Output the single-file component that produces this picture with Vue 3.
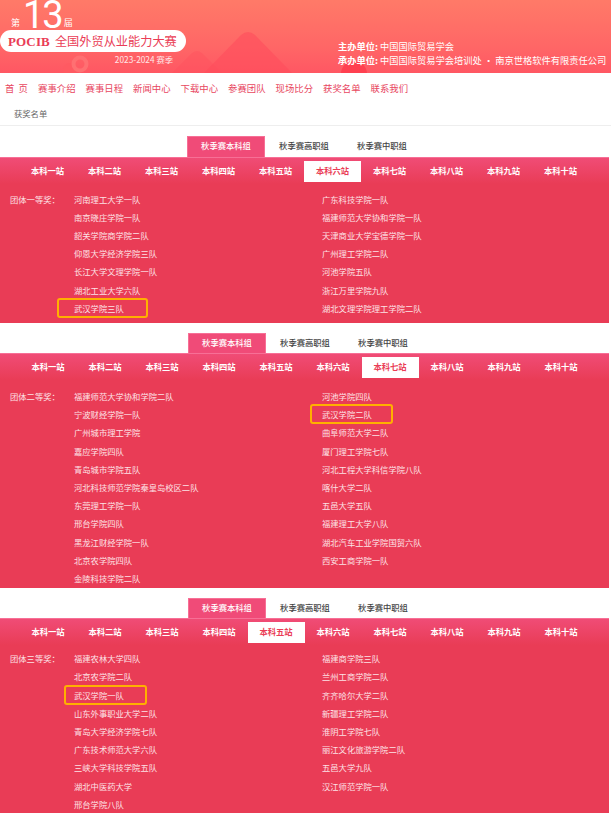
<script setup>
const navs = ['首 页', '赛事介绍', '赛事日程', '新闻中心', '下载中心', '参赛团队', '现场比分', '获奖名单', '联系我们']
const tabs = ['秋季赛本科组', '秋季赛高职组', '秋季赛中职组']
const stations = ['本科一站', '本科二站', '本科三站', '本科四站', '本科五站', '本科六站', '本科七站', '本科八站', '本科九站', '本科十站']

const sections = [
  {
    active: 5,
    award: '团体一等奖：',
    variant: 'first',
    mark: 'mark-a',
    left: ['河南理工大学一队', '南京晓庄学院一队', '韶关学院商学院二队', '仰恩大学经济学院三队', '长江大学文理学院一队', '湖北工业大学六队', '武汉学院三队'],
    right: ['广东科技学院一队', '福建师范大学协和学院一队', '天津商业大学宝德学院一队', '广州理工学院二队', '河池学院五队', '浙江万里学院九队', '湖北文理学院理工学院二队']
  },
  {
    active: 6,
    award: '团体二等奖：',
    variant: 'second',
    mark: 'mark-b',
    left: ['福建师范大学协和学院二队', '宁波财经学院一队', '广州城市理工学院', '嘉应学院四队', '青岛城市学院五队', '河北科技师范学院秦皇岛校区二队', '东莞理工学院一队', '邢台学院四队', '黑龙江财经学院一队', '北京农学院四队', '金陵科技学院二队'],
    right: ['河池学院四队', '武汉学院二队', '曲阜师范大学二队', '厦门理工学院七队', '河北工程大学科信学院八队', '喀什大学二队', '五邑大学五队', '福建理工大学八队', '湖北汽车工业学院国贸六队', '西安工商学院一队']
  },
  {
    active: 4,
    award: '团体三等奖：',
    variant: 'third',
    mark: 'mark-c',
    left: ['福建农林大学四队', '北京农学院二队', '武汉学院一队', '山东外事职业大学二队', '青岛大学经济学院七队', '广东技术师范大学六队', '三峡大学科技学院五队', '湖北中医药大学', '邢台学院八队'],
    right: ['福建商学院三队', '兰州工商学院二队', '齐齐哈尔大学二队', '新疆理工学院二队', '淮阴工学院七队', '丽江文化旅游学院二队', '五邑大学九队', '汉江师范学院一队']
  }
]

const isMark = (name) => name.startsWith('武汉学院')
</script>

<template>
  <div class="page">
    <header class="banner">
      <svg class="decor" width="611" height="73" viewBox="0 0 611 73">
        <path d="M204 73 L241 35 Q248 29 255 35 L292 73 Z" fill="#ff4c5c" opacity="0.6" />
        <path d="M172 73 L192 53 Q197 49 202 53 L222 73 Z" fill="#ff4c5c" opacity="0.35" />
        <circle cx="70" cy="70" r="7" fill="#ff5a62" />
        <circle cx="80" cy="64" r="6.5" fill="none" stroke="#ff7072" stroke-width="4" />
        <circle cx="354" cy="74" r="13" fill="#ff4050" />
      </svg>
      <div class="logo">
        <div class="edition"><span>第</span><b>13</b><span>届</span></div>
        <div class="pill"><em>POCIB</em>全国外贸从业能力大赛</div>
        <div class="season">2023-2024 赛季</div>
      </div>
      <div class="orgs">
        <div><b>主办单位:</b> 中国国际贸易学会</div>
        <div><b>承办单位:</b> 中国国际贸易学会培训处 · 南京世格软件有限责任公司</div>
      </div>
    </header>

    <nav class="nav">
      <a v-for="n in navs" :key="n">{{ n }}</a>
    </nav>

    <div class="crumb">获奖名单</div>

    <section v-for="s in sections" :key="s.award" class="block" :class="s.variant">
      <div class="tabs">
        <span v-for="(t, i) in tabs" :key="t" class="tab" :class="{ on: i === 0 }">{{ t }}</span>
      </div>
      <div class="panel">
        <div class="stations">
          <span v-for="(st, i) in stations" :key="st" class="station" :class="{ on: i === s.active }">{{ st }}</span>
        </div>
        <div class="result">
          <div class="award">{{ s.award }}</div>
          <ul class="col col-left">
            <li v-for="name in s.left" :key="name" :class="isMark(name) ? s.mark : ''">{{ name }}</li>
          </ul>
          <ul class="col col-right">
            <li v-for="name in s.right" :key="name" :class="isMark(name) ? s.mark : ''">{{ name }}</li>
          </ul>
        </div>
      </div>
    </section>
  </div>
</template>

<style scoped>
.page {
  position: relative;
  width: 611px;
  height: 813px;
  overflow: hidden;
  background: #fff;
  font-family: "Noto Sans CJK SC", "Liberation Sans", sans-serif;
}

.banner {
  position: relative;
  height: 73px;
  background: linear-gradient(180deg, #ff7a68 0%, #ff6666 65%, #ff5763 100%);
  color: #fff;
  overflow: hidden;
}

.decor {
  position: absolute;
  left: 0;
  top: 0;
}

.logo {
  position: relative;
  width: 186px;
}

.edition {
  display: flex;
  align-items: flex-end;
  height: 30px;
  padding-left: 11px;
  font-size: 9px;
}

.edition span {
  line-height: 15px;
}

.edition b {
  font-family: "Roboto", "Liberation Sans", sans-serif;
  font-weight: 400;
  font-size: 38px;
  line-height: 30px;
  letter-spacing: -2px;
  margin: 0 2px 0 3px;
}

.pill {
  height: 22px;
  line-height: 22px;
  background: #fff;
  border-radius: 11px;
  color: #ea3d56;
  font-size: 12.2px;
  padding-left: 8px;
  white-space: nowrap;
}

.pill em {
  font-family: "Liberation Serif", serif;
  font-style: normal;
  font-weight: 700;
  font-size: 13px;
  letter-spacing: 0.15px;
  margin-right: 5px;
}

.season {
  text-align: right;
  padding-right: 13px;
  margin-top: 1px;
  font-size: 8.3px;
  line-height: 13px;
  opacity: 0.85;
}

.orgs {
  position: absolute;
  left: 338px;
  top: 39px;
  font-size: 9.25px;
  line-height: 14px;
  white-space: nowrap;
}

.orgs b {
  font-weight: 700;
}

.nav {
  display: flex;
  gap: 10px;
  height: 30px;
  align-items: center;
  padding-left: 5px;
  font-size: 9.4px;
  color: #e8475f;
  white-space: nowrap;
}

.nav a:first-child {
  width: 23px;
  text-align-last: justify;
}

.crumb {
  height: 22px;
  line-height: 20px;
  padding-left: 14px;
  font-size: 8.3px;
  color: #666;
  border-bottom: 1px solid #eee;
}

.block {
  padding-top: 10px;
}

.tabs {
  display: flex;
  padding-left: 187px;
  height: 21px;
}

.second .tabs,
.third .tabs {
  padding-left: 188px;
  height: 20px;
}

.tab {
  width: 78px;
  text-align: center;
  line-height: 19px;
  font-size: 8.3px;
  color: #444;
  font-weight: 500;
  box-sizing: border-box;
}

.tab.on {
  color: #fff;
  background: #f04b78;
  border: 1px solid #f76f96;
  border-bottom: 0;
  line-height: 17px;
}

.panel {
  width: 609px;
  background: linear-gradient(180deg, #f04c76 0, #e93c56 26px);
  border-top: 1px solid #f76f96;
  box-sizing: border-box;
  color: #fff;
}

.stations {
  display: flex;
  padding: 3px 0 0 19px;
  height: 24px;
}

.second .stations,
.third .stations {
  padding-left: 19.5px;
}

.station {
  width: 57px;
  height: 21px;
  line-height: 19px;
  text-align: center;
  font-size: 8.3px;
  font-weight: 700;
}

.station.on {
  background: #fff;
  color: #ea3d56;
}

.result {
  display: flex;
  padding: 4.6px 0 6px 10px;
  font-size: 8.3px;
  line-height: 18.2px;
  color: #fde2e6;
}

.second .result {
  padding: 6px 0 1px 10px;
}

.third .result {
  padding: 3px 0 0 10px;
}

.award {
  width: 64px;
  flex-shrink: 0;
}

.col {
  list-style: none;
  margin: 0;
  padding: 0;
}

.col-left {
  width: 248px;
}

.col li {
  position: relative;
  white-space: nowrap;
}

.mark-a::after,
.mark-b::after,
.mark-c::after {
  content: "";
  position: absolute;
  top: -1px;
  bottom: -1px;
  border: 2px solid #ffb000;
  border-radius: 3px;
  box-sizing: border-box;
}

.mark-a::after {
  left: -17px;
  width: 91px;
}

.mark-b::after {
  left: -12px;
  width: 83px;
}

.mark-c::after {
  left: -10px;
  width: 83px;
}
</style>
